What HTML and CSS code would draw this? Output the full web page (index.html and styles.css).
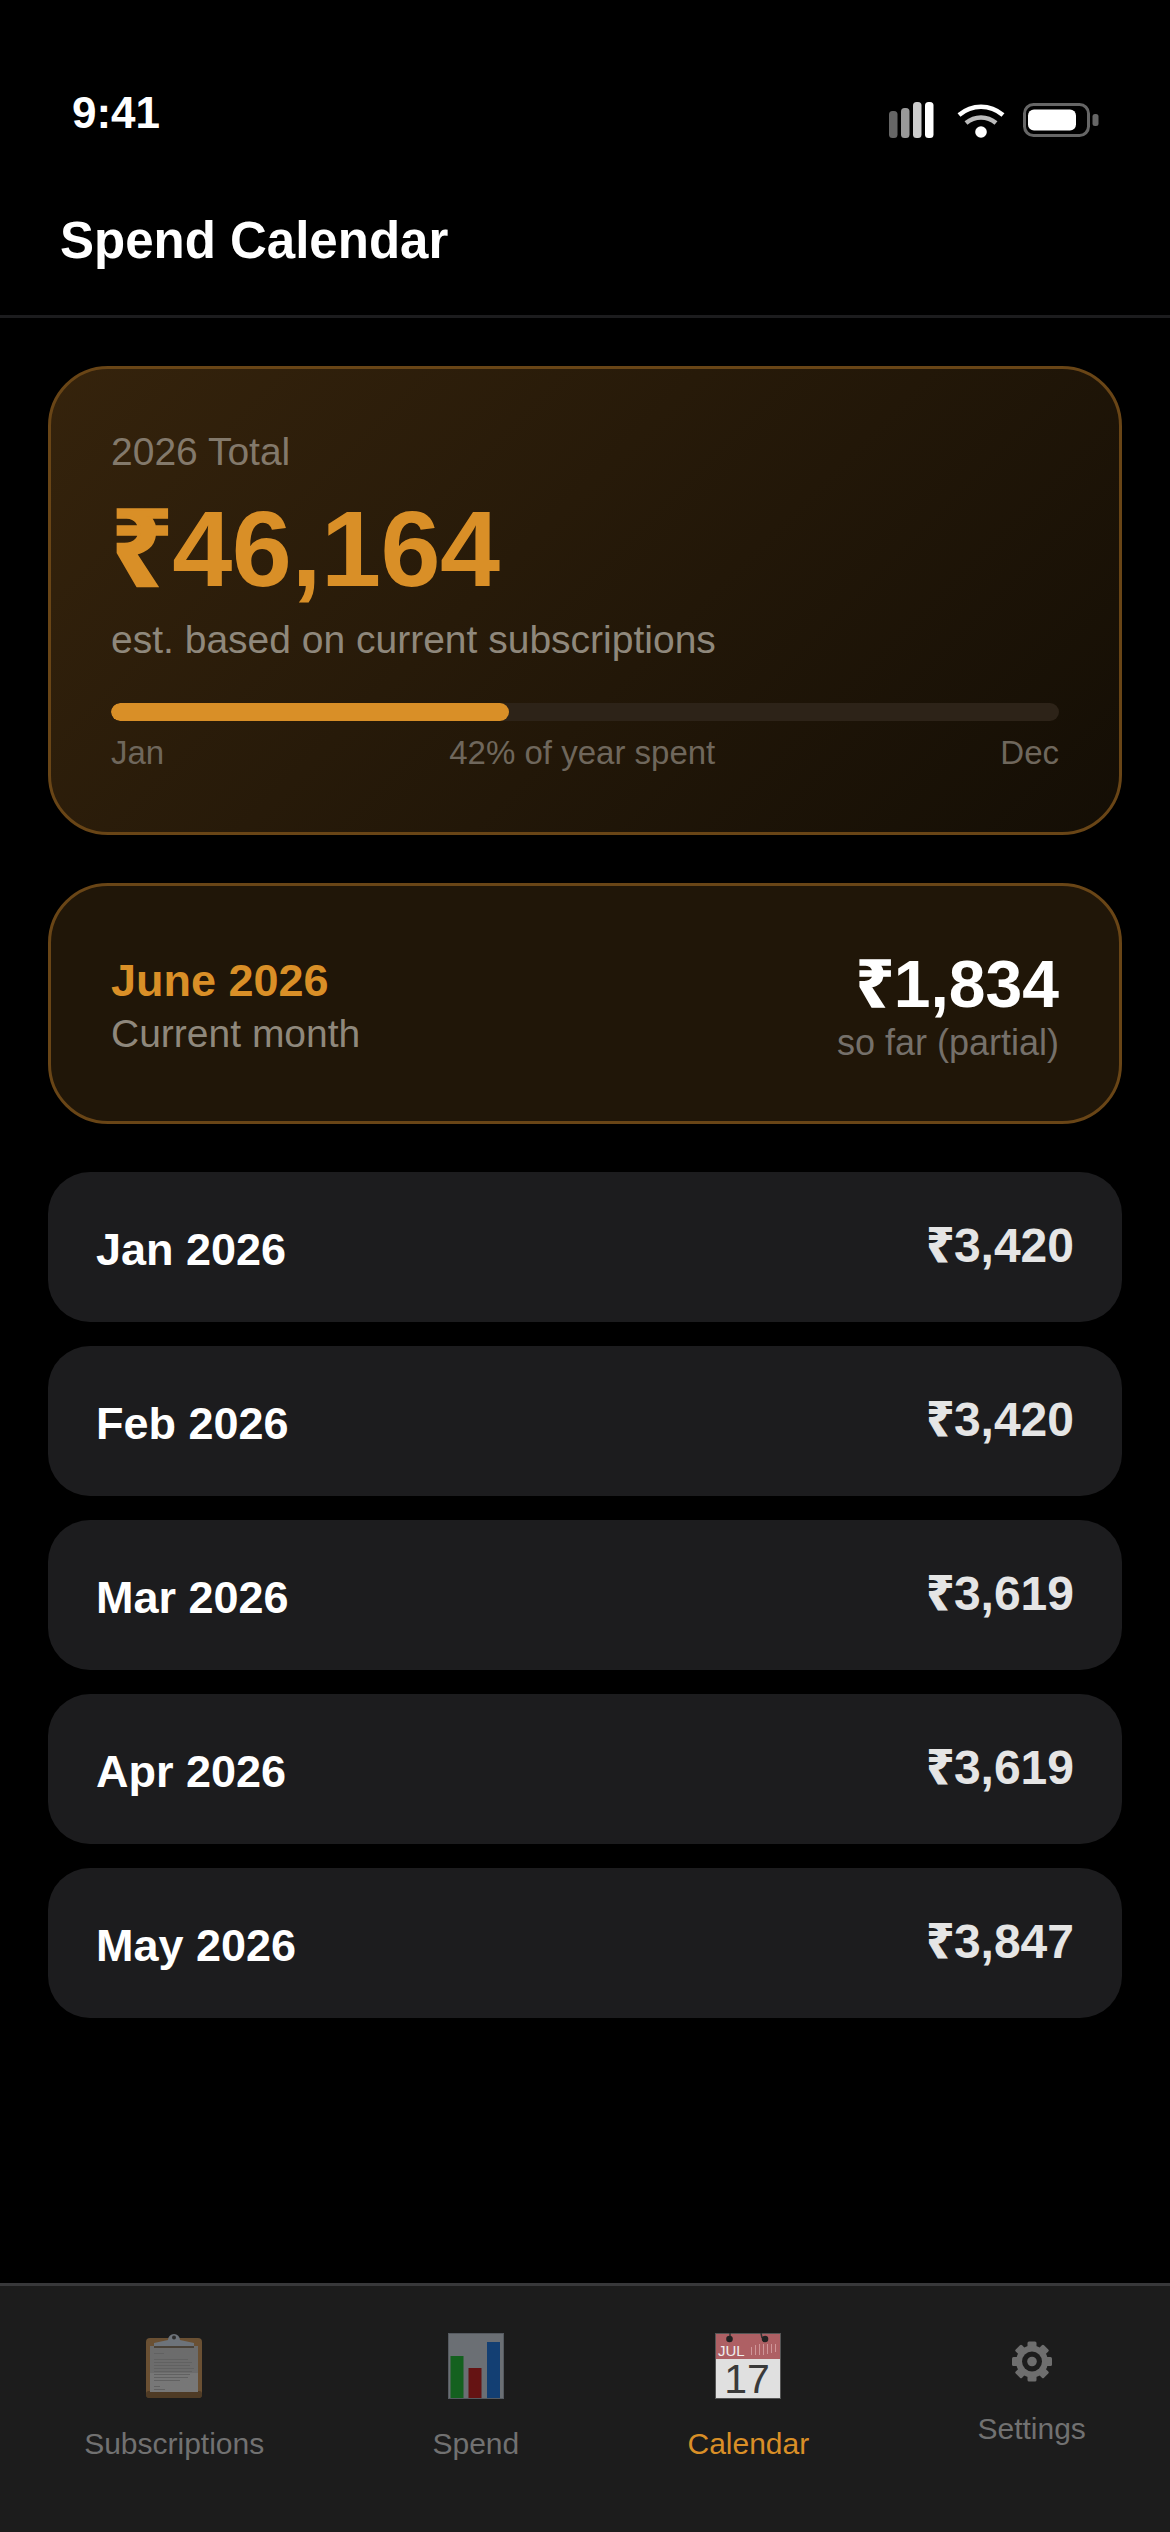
FILE: index.html
```html
<!DOCTYPE html>
<html lang="en">
<head>
  <meta charset="UTF-8">
  <meta name="viewport" content="width=device-width, initial-scale=1.0">
  <title>Spend Calendar</title>
  <link rel="stylesheet" href="styles.css">
</head>
<body>
  <div class="app">
    <div class="status-bar">
      <span class="clock">9:41</span>
      <div class="status-icons">
        <svg class="icon-signal" width="45" height="36" viewBox="0 0 45 36">
          <rect x="0" y="9" width="8.5" height="27" rx="3.5" fill="#fff" opacity="0.4"/>
          <rect x="12" y="6" width="8.5" height="30" rx="3.5" fill="#fff" opacity="0.6"/>
          <rect x="24" y="0" width="8.5" height="36" rx="3.5" fill="#fff" opacity="0.8"/>
          <rect x="36" y="0" width="8.5" height="36" rx="3.5" fill="#fff"/>
        </svg>
        <svg class="icon-wifi" width="48" height="34" viewBox="0 0 48 34">
          <path d="M2 11C15 0 33 0 46 11" fill="none" stroke="#fff" stroke-width="4.500"/>
          <path d="M9 19C18 11.500 30 11.500 39 19" fill="none" stroke="#bbb" stroke-width="4.500"/>
          <circle cx="24" cy="28" r="5.800" fill="#fff"/>
        </svg>
        <svg class="icon-battery" width="76" height="34" viewBox="0 0 76 34">
          <rect x="1.500" y="1.500" width="64" height="31" rx="9" fill="none" stroke="#666" stroke-width="3"/>
          <rect x="5" y="6.500" width="48" height="21" rx="6" fill="#fff"/>
          <rect x="69.500" y="11" width="6" height="12" rx="2.500" fill="#666"/>
        </svg>
      </div>
    </div>

    <header class="page-header">
      <h1>Spend Calendar</h1>
    </header>

    <main class="content">
      <section class="card total-card">
        <div class="total-label">2026 Total</div>
        <div class="total-amount"><span class="rs">₹</span>46,164</div>
        <div class="total-note">est. based on current subscriptions</div>
        <div class="progress"><div class="progress-fill" style="width: 42%"></div></div>
        <div class="progress-labels">
          <span>Jan</span>
          <span>42% of year spent</span>
          <span>Dec</span>
        </div>
      </section>

      <section class="card month-card">
        <div class="month-left">
          <div class="month-name">June 2026</div>
          <div class="month-note">Current month</div>
        </div>
        <div class="month-right">
          <div class="month-amount"><span class="rs">₹</span>1,834</div>
          <div class="month-partial">so far (partial)</div>
        </div>
      </section>

      <section class="month-list">
        <div class="month-row"><span class="row-name">Jan 2026</span><span class="row-amount"><span class="rs">₹</span>3,420</span></div>
        <div class="month-row"><span class="row-name">Feb 2026</span><span class="row-amount"><span class="rs">₹</span>3,420</span></div>
        <div class="month-row"><span class="row-name">Mar 2026</span><span class="row-amount"><span class="rs">₹</span>3,619</span></div>
        <div class="month-row"><span class="row-name">Apr 2026</span><span class="row-amount"><span class="rs">₹</span>3,619</span></div>
        <div class="month-row"><span class="row-name">May 2026</span><span class="row-amount"><span class="rs">₹</span>3,847</span></div>
      </section>
    </main>

    <nav class="tab-bar">
      <div class="tab">
        <svg class="tab-icon" width="56" height="66" viewBox="0 0 56 66">
          <rect x="0" y="5" width="56" height="60" rx="4" fill="#6a5033"/>
          <rect x="0" y="58" width="56" height="7" rx="3" fill="#4f3b25"/>
          <rect x="4" y="13" width="48" height="46" fill="#6c6c6c"/>
          <rect x="4" y="40" width="48" height="19" fill="#777"/>
          <path d="M8 10L22 7A6 6 0 0 1 34 7L48 10V13H8Z" fill="#6d737a"/>
          <circle cx="28" cy="4.500" r="2" fill="#2c2c2c"/>
          <rect x="8" y="13" width="40" height="2" fill="#4a4238"/>
          <g fill="#616161">
            <rect x="8" y="20" width="10" height="1"/>
            <rect x="8" y="26" width="34" height="1"/>
            <rect x="8" y="29" width="38" height="1"/>
            <rect x="8" y="32" width="36" height="1"/>
            <rect x="8" y="35" width="40" height="1"/>
            <rect x="8" y="38" width="38" height="1"/>
            <rect x="8" y="41" width="36" height="1"/>
            <rect x="8" y="44" width="34" height="1"/>
            <rect x="8" y="47" width="26" height="1"/>
            <rect x="8" y="53" width="6" height="1"/>
            <rect x="8" y="56" width="11" height="1"/>
          </g>
        </svg>
        <span class="tab-label">Subscriptions</span>
      </div>
      <div class="tab">
        <svg class="tab-icon" width="56" height="66" viewBox="0 0 56 66">
          <rect x="0.500" y="0.500" width="55" height="65" fill="#6b6f74" stroke="#555a60"/>
          <rect x="2.500" y="23" width="13" height="42" fill="#14611f"/>
          <rect x="20.500" y="35" width="13" height="30" fill="#651313"/>
          <rect x="39" y="9" width="13" height="56" fill="#133f73"/>
        </svg>
        <span class="tab-label">Spend</span>
      </div>
      <div class="tab tab-active">
        <svg class="tab-icon cal-icon" width="66" height="70" viewBox="0 0 66 70">
          <rect x="0.500" y="26" width="65" height="39.500" fill="#e0e0e0"/>
          <rect x="0.500" y="0.500" width="65" height="25.500" fill="#ae6064"/>
          <rect x="0.500" y="0.500" width="65" height="65" fill="none" stroke="#555"/>
          <path d="M15 0V5M46 0L47 5" stroke="#333" stroke-width="1.500"/>
          <circle cx="14.500" cy="6" r="3.300" fill="#222"/>
          <circle cx="50" cy="6" r="3.300" fill="#222"/>
          <text class="cal-month" x="3" y="22.500">JUL</text>
          <g fill="#cf9699">
            <rect x="36" y="14" width="1" height="8"/>
            <rect x="40" y="12" width="1" height="10"/>
            <rect x="44" y="11" width="1" height="11"/>
            <rect x="48" y="11" width="1" height="11"/>
            <rect x="52" y="11" width="1" height="10"/>
            <rect x="56" y="11" width="1" height="9"/>
            <rect x="60" y="11" width="1" height="8"/>
          </g>
          <text class="cal-day" x="32" y="59.500">17</text>
        </svg>
        <span class="tab-label">Calendar</span>
      </div>
      <div class="tab">
        <svg class="tab-icon" width="40" height="51" viewBox="0 0 40 51">
          <g fill="#6e6e6e">
            <rect x="15.500" y="8.500" width="9" height="40" rx="1.500"/>
            <rect x="15.500" y="8.500" width="9" height="40" rx="1.500" transform="rotate(45 20 28.500)"/>
            <rect x="15.500" y="8.500" width="9" height="40" rx="1.500" transform="rotate(90 20 28.500)"/>
            <rect x="15.500" y="8.500" width="9" height="40" rx="1.500" transform="rotate(135 20 28.500)"/>
          </g>
          <circle cx="20" cy="28.500" r="13" fill="none" stroke="#6e6e6e" stroke-width="6"/>
          <circle cx="20" cy="28.500" r="10" fill="#1c1c1c"/>
          <circle cx="20" cy="28.500" r="4.800" fill="#6e6e6e"/>
        </svg>
        <span class="tab-label">Settings</span>
      </div>
    </nav>
  </div>
</body>
</html>
```

FILE: styles.css
```css
* {
  box-sizing: border-box;
}
body {
  margin: 0;
  background-color: #000;
  color: #fff;
  font-family: "Liberation Sans", Arial, sans-serif;
}
.app {
  width: 1170px;
  height: 2532px;
  display: flex;
  flex-direction: column;
}
/* rupee sign comes from another font, keep it out of the line height */
.rs {
  font-family: "Noto Sans", "Liberation Sans", sans-serif;
  line-height: 0;
  -webkit-text-stroke: 0.025em currentColor;
}

/* status bar */
.status-bar {
  height: 138px;
  padding: 89px 71px 0 72px;
  display: flex;
  justify-content: space-between;
  align-items: flex-start;
}
.clock {
  font-size: 44px;
  font-weight: 700;
  line-height: 48px;
}
.status-icons {
  display: flex;
  align-items: flex-start;
  margin-top: 13px;
}
.icon-wifi {
  margin: 2px 18px 0 23px;
}
.icon-battery {
  margin-top: 1px;
}

/* header */
.page-header {
  height: 180px;
  padding: 72px 60px 0 60px;
  border-bottom: 3px solid #1c1c1e;
}
.page-header h1 {
  margin: 0;
  font-size: 51px;
  font-weight: 700;
  line-height: 62px;
}

/* main */
.content {
  flex: 1;
  padding: 48px;
  display: flex;
  flex-direction: column;
  gap: 48px;
}
.card {
  border: 3px solid #694516;
  border-radius: 60px;
  padding: 60px;
}
.total-card {
  background: linear-gradient(135deg, #35230c 0%, #140e05 100%);
}
.total-label {
  font-size: 39px;
  line-height: 45px;
  color: #83796b;
}
.total-amount {
  margin-top: 20px;
  font-size: 108px;
  font-weight: 700;
  line-height: 110px;
  letter-spacing: -0.5px;
  color: #d98f27;
}
.total-note {
  margin-top: 13px;
  font-size: 39px;
  line-height: 45px;
  color: #8f887c;
}
.progress {
  margin-top: 41px;
  height: 18px;
  border-radius: 9px;
  background-color: #2d2318;
  overflow: hidden;
}
.progress-fill {
  height: 100%;
  border-radius: 9px;
  background-color: #d98f27;
}
.progress-labels {
  margin-top: 13px;
  display: flex;
  justify-content: space-between;
  font-size: 33px;
  line-height: 38px;
  color: #6f675c;
}

.month-card {
  height: 241px;
  padding: 0 60px;
  background-color: #201608;
  display: flex;
  justify-content: space-between;
  align-items: center;
}
.month-left {
  padding-top: 4px;
}
.month-name {
  font-size: 45px;
  font-weight: 700;
  line-height: 52px;
  color: #d98f27;
}
.month-note {
  margin-top: 4px;
  font-size: 39px;
  line-height: 46px;
  color: #8f887c;
}
.month-right {
  padding-top: 3px;
  text-align: right;
}
.month-amount {
  font-size: 66px;
  font-weight: 700;
  line-height: 76px;
}
.month-partial {
  font-size: 36px;
  line-height: 42px;
  color: #75706a;
}

.month-list {
  display: flex;
  flex-direction: column;
  gap: 24px;
}
.month-row {
  height: 150px;
  padding: 0 48px;
  border-radius: 42px;
  background-color: #1c1c1e;
  display: flex;
  justify-content: space-between;
  align-items: center;
}
.row-name {
  font-size: 45px;
  font-weight: 700;
  margin-top: 6px;
}
.row-amount {
  font-size: 48px;
  font-weight: 700;
  color: #e5e5e5;
  margin-bottom: 3px;
}

/* tab bar */
.tab-bar {
  height: 249px;
  padding-top: 47px;
  border-top: 3px solid #38383a;
  background-color: #1c1c1c;
  display: flex;
  justify-content: space-around;
  align-items: flex-start;
}
.tab {
  display: flex;
  flex-direction: column;
  align-items: center;
}
.tab-icon {
  display: block;
}
.cal-icon {
  margin-bottom: -4px;
}
.tab-label {
  margin-top: 28px;
  font-size: 30px;
  line-height: 34px;
  color: #717171;
}
.tab-active .tab-label {
  color: #d98f27;
}
.cal-month {
  font-family: "Liberation Sans", Arial, sans-serif;
  font-size: 15px;
  fill: #eee;
}
.cal-day {
  font-family: "Liberation Sans", Arial, sans-serif;
  font-size: 41px;
  text-anchor: middle;
  fill: #3a3a3a;
}
```
